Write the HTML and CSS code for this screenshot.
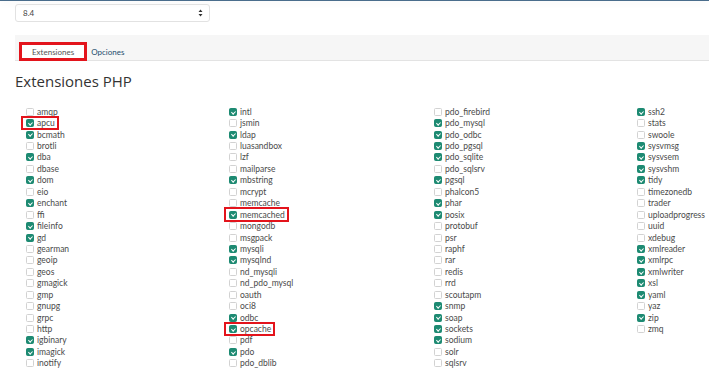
FILE: index.html
```html
<!DOCTYPE html>
<html lang="es">
<head>
  <meta charset="UTF-8" />
  <title>Extensiones PHP</title>
  <link rel="stylesheet" href="styles.css">
</head>
<body>
  <div class="topline"></div>

  <div class="version">
    <span>8.4</span>
    <svg class="arrows" width="5" height="8" viewBox="0 0 5 8"><path d="M2.5 0.5 L4.5 3 L0.5 3 Z M2.5 7.5 L4.5 5 L0.5 5 Z" fill="#333"/></svg>
  </div>

  <div class="tabs">
    <span class="tab active marked">Extensiones</span>
    <span class="tab">Opciones</span>
  </div>

  <h1>Extensiones PHP</h1>

  <div class="ext-grid">
    <div class="col">
      <label class="opt"><span class="box"></span>amqp</label>
      <label class="opt on marked"><span class="box"></span>apcu</label>
      <label class="opt on"><span class="box"></span>bcmath</label>
      <label class="opt"><span class="box"></span>brotli</label>
      <label class="opt on"><span class="box"></span>dba</label>
      <label class="opt"><span class="box"></span>dbase</label>
      <label class="opt on"><span class="box"></span>dom</label>
      <label class="opt"><span class="box"></span>eio</label>
      <label class="opt on"><span class="box"></span>enchant</label>
      <label class="opt"><span class="box"></span>ffi</label>
      <label class="opt on"><span class="box"></span>fileinfo</label>
      <label class="opt on"><span class="box"></span>gd</label>
      <label class="opt"><span class="box"></span>gearman</label>
      <label class="opt"><span class="box"></span>geoip</label>
      <label class="opt"><span class="box"></span>geos</label>
      <label class="opt"><span class="box"></span>gmagick</label>
      <label class="opt"><span class="box"></span>gmp</label>
      <label class="opt"><span class="box"></span>gnupg</label>
      <label class="opt"><span class="box"></span>grpc</label>
      <label class="opt"><span class="box"></span>http</label>
      <label class="opt on"><span class="box"></span>igbinary</label>
      <label class="opt on"><span class="box"></span>imagick</label>
      <label class="opt"><span class="box"></span>inotify</label>
    </div>
    <div class="col">
      <label class="opt on"><span class="box"></span>intl</label>
      <label class="opt"><span class="box"></span>jsmin</label>
      <label class="opt on"><span class="box"></span>ldap</label>
      <label class="opt"><span class="box"></span>luasandbox</label>
      <label class="opt"><span class="box"></span>lzf</label>
      <label class="opt"><span class="box"></span>mailparse</label>
      <label class="opt on"><span class="box"></span>mbstring</label>
      <label class="opt"><span class="box"></span>mcrypt</label>
      <label class="opt"><span class="box"></span>memcache</label>
      <label class="opt on marked"><span class="box"></span>memcached</label>
      <label class="opt"><span class="box"></span>mongodb</label>
      <label class="opt"><span class="box"></span>msgpack</label>
      <label class="opt on"><span class="box"></span>mysqli</label>
      <label class="opt on"><span class="box"></span>mysqlnd</label>
      <label class="opt"><span class="box"></span>nd_mysqli</label>
      <label class="opt"><span class="box"></span>nd_pdo_mysql</label>
      <label class="opt"><span class="box"></span>oauth</label>
      <label class="opt"><span class="box"></span>oci8</label>
      <label class="opt on"><span class="box"></span>odbc</label>
      <label class="opt on marked"><span class="box"></span>opcache</label>
      <label class="opt"><span class="box"></span>pdf</label>
      <label class="opt on"><span class="box"></span>pdo</label>
      <label class="opt"><span class="box"></span>pdo_dblib</label>
    </div>
    <div class="col">
      <label class="opt"><span class="box"></span>pdo_firebird</label>
      <label class="opt on"><span class="box"></span>pdo_mysql</label>
      <label class="opt on"><span class="box"></span>pdo_odbc</label>
      <label class="opt on"><span class="box"></span>pdo_pgsql</label>
      <label class="opt on"><span class="box"></span>pdo_sqlite</label>
      <label class="opt"><span class="box"></span>pdo_sqlsrv</label>
      <label class="opt on"><span class="box"></span>pgsql</label>
      <label class="opt"><span class="box"></span>phalcon5</label>
      <label class="opt on"><span class="box"></span>phar</label>
      <label class="opt on"><span class="box"></span>posix</label>
      <label class="opt"><span class="box"></span>protobuf</label>
      <label class="opt"><span class="box"></span>psr</label>
      <label class="opt"><span class="box"></span>raphf</label>
      <label class="opt"><span class="box"></span>rar</label>
      <label class="opt"><span class="box"></span>redis</label>
      <label class="opt"><span class="box"></span>rrd</label>
      <label class="opt"><span class="box"></span>scoutapm</label>
      <label class="opt on"><span class="box"></span>snmp</label>
      <label class="opt on"><span class="box"></span>soap</label>
      <label class="opt on"><span class="box"></span>sockets</label>
      <label class="opt on"><span class="box"></span>sodium</label>
      <label class="opt"><span class="box"></span>solr</label>
      <label class="opt"><span class="box"></span>sqlsrv</label>
    </div>
    <div class="col">
      <label class="opt on"><span class="box"></span>ssh2</label>
      <label class="opt"><span class="box"></span>stats</label>
      <label class="opt"><span class="box"></span>swoole</label>
      <label class="opt on"><span class="box"></span>sysvmsg</label>
      <label class="opt on"><span class="box"></span>sysvsem</label>
      <label class="opt on"><span class="box"></span>sysvshm</label>
      <label class="opt on"><span class="box"></span>tidy</label>
      <label class="opt"><span class="box"></span>timezonedb</label>
      <label class="opt"><span class="box"></span>trader</label>
      <label class="opt"><span class="box"></span>uploadprogress</label>
      <label class="opt"><span class="box"></span>uuid</label>
      <label class="opt"><span class="box"></span>xdebug</label>
      <label class="opt on"><span class="box"></span>xmlreader</label>
      <label class="opt on"><span class="box"></span>xmlrpc</label>
      <label class="opt on"><span class="box"></span>xmlwriter</label>
      <label class="opt on"><span class="box"></span>xsl</label>
      <label class="opt on"><span class="box"></span>yaml</label>
      <label class="opt"><span class="box"></span>yaz</label>
      <label class="opt on"><span class="box"></span>zip</label>
      <label class="opt"><span class="box"></span>zmq</label>
    </div>
  </div>
</body>
</html>
```
FILE: styles.css
```css
body {
  margin: 0;
  font-family: Lato, "Open Sans", sans-serif;
  background-color: #fff;
  color: #444;
  overflow: hidden;
}

.topline {
  height: 1px;
  background-color: #4a6d8c;
  box-shadow: 0 2px 7px rgba(0, 0, 0, 0.12);
}

.version {
  display: flex;
  align-items: center;
  justify-content: space-between;
  box-sizing: border-box;
  width: 195px;
  height: 18px;
  margin: 3px 0 0 15px;
  padding: 0 6px 0 7px;
  border: 1px solid #e2e2e2;
  border-radius: 3px;
  font-size: 8px;
  color: #444;
}

.tabs {
  display: flex;
  align-items: flex-end;
  height: 26px;
  margin: 13px 0 0 15px;
  background-color: #f6f6f6;
  border-bottom: 1px solid #e3e3e3;
  box-sizing: border-box;
}

.tab {
  position: relative;
  display: flex;
  align-items: center;
  height: 17px;
  padding: 0 7px;
  font-size: 8px;
  color: #1c4d6d;
}

.tab.active {
  margin-left: 7px;
  padding: 0 10px;
  background-color: #fff;
  color: #555;
}

h1 {
  margin: 10px 0 0 15px;
  font-family: "Open Sans", sans-serif;
  font-size: 15px;
  font-weight: normal;
  color: #333;
}

.ext-grid {
  display: grid;
  grid-template-columns: 203px 205px 203px 1fr;
  margin: 15px 0 0 26px;
}

.col {
  display: flex;
  flex-direction: column;
  align-items: flex-start;
}

.opt {
  position: relative;
  display: inline-flex;
  align-items: center;
  gap: 3px;
  height: 11.45px;
  font-size: 8.5px;
  color: #4a4a4a;
}

.box {
  position: relative;
  width: 8px;
  height: 8px;
  border: 1px solid #d2d2d2;
  border-radius: 1.5px;
  box-sizing: border-box;
  background-color: #fff;
}

.opt.on .box {
  background-color: #1d8a72;
  border-color: #1d8a72;
}

.opt.on .box::after {
  content: "";
  position: absolute;
  left: 2px;
  top: 0.8px;
  width: 1.5px;
  height: 3.2px;
  border: solid #fff;
  border-width: 0 1px 1px 0;
  transform: rotate(45deg);
}

.marked::after {
  content: "";
  position: absolute;
  top: -1.5px;
  bottom: -1.5px;
  left: -5px;
  right: -4px;
  border: 2.5px solid #e3141c;
}

.tab.marked::after {
  top: -1px;
  bottom: -1px;
  left: -3px;
  right: -3px;
  border-width: 3px;
}
```
